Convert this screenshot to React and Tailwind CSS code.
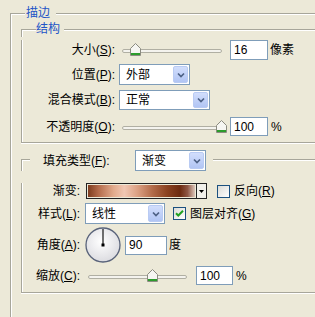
import React from "react";

const Select = ({ size, text }) => (
  <div className={`flex items-stretch border border-[#7f9db9] bg-white ${size}`}>
    <span className="flex-1 flex items-center pl-[6px]">{text}</span>
    <span className="my-px mr-px w-[15px] rounded-[2px] border border-[#b9cbf3] bg-gradient-to-b from-[#d2defc] to-[#b1c5f4] flex items-center justify-center">
      <svg width="8" height="6" viewBox="0 0 8 6">
        <path d="M1 1.5l3 3 3-3" stroke="#4d6185" strokeWidth="1.7" fill="none" />
      </svg>
    </span>
  </div>
);

const Field = ({ size, value }) => (
  <div className={`flex items-center border border-[#7f9db9] bg-white pl-[3px] ${size}`}>
    {value}
  </div>
);

const Slider = ({ size, thumb }) => (
  <div className={`relative h-[14px] flex items-center ${size}`}>
    <div className="mt-[2px] h-[4px] w-full rounded-[2px] border border-[#b0afa3] bg-[#f4f3ee]" />
    <svg className={`absolute top-0 ${thumb}`} width="11" height="13" viewBox="0 0 11 13">
      <path d="M0.5 5.5 L5.5 0.5 L10.5 5.5 V12.5 H0.5 Z" fill="#f6f6f2" stroke="#8b8b80" />
      <rect x="1" y="10" width="9" height="2" fill="#2c9c2c" />
    </svg>
  </div>
);

const Check = ({ checked }) => (
  <div className="w-[13px] h-[13px] border border-[#1c5180] bg-gradient-to-br from-[#dcdcd7] to-white flex items-center justify-center">
    {checked && (
      <svg width="9" height="9" viewBox="0 0 9 9">
        <path d="M1 4.2l2.3 2.3L8 1.8" stroke="#21a121" strokeWidth="2" fill="none" />
      </svg>
    )}
  </div>
);

export default function App() {
  return (
    <div className="w-[315px] h-[317px] overflow-hidden bg-[#ece9d8] pt-[5px] pl-[10px] text-[12px] leading-none text-black font-['Liberation_Sans','Noto_Sans_CJK_SC',sans-serif]">
      {/* 描边 */}
      <div className="flex h-[16px]">
        <div className="w-[15px] h-[8px] self-end border-t border-l border-[#a7a69a] shadow-[inset_1px_1px_0_#fff]" />
        <span className="ml-[1px] mr-[6px] self-center text-[#2154c7]">描边</span>
        <div className="flex-1 h-[8px] self-end border-t border-[#a7a69a] shadow-[inset_0_1px_0_#fff]" />
      </div>
      <div className="h-[296px] border-l border-[#a7a69a] shadow-[inset_1px_0_0_#fff] pl-[10px]">
        {/* 结构 */}
        <div className="flex h-[16px]">
          <div className="w-[15px] h-[8px] self-end border-t border-l border-[#a7a69a] shadow-[inset_1px_1px_0_#fff]" />
          <span className="mr-[4px] self-center text-[#2154c7]">结构</span>
          <div className="flex-1 h-[8px] self-end border-t border-[#a7a69a] shadow-[inset_0_1px_0_#fff]" />
        </div>
        <div className="border-l border-b border-[#a7a69a] shadow-[inset_1px_0_0_#fff,0_1px_0_#fff] pb-[6px]">
          <div className="flex items-center mt-[3px] h-[20px]">
            <span className="w-[93px] text-right">大小(<u>S</u>):</span>
            <Slider size="ml-[7px] w-[100px]" thumb="left-[8px]" />
            <Field size="ml-[8px] w-[38px] h-[20px]" value="16" />
            <span className="ml-[2px]">像素</span>
          </div>
          <div className="flex items-center mt-[4px] h-[21px]">
            <span className="w-[93px] text-right">位置(<u>P</u>):</span>
            <Select size="ml-[4px] w-[71px] h-[21px]" text="外部" />
          </div>
          <div className="flex items-center mt-[5px] h-[20px]">
            <span className="w-[93px] text-right">混合模式(<u>B</u>):</span>
            <Select size="ml-[4px] w-[91px] h-[20px]" text="正常" />
          </div>
          <div className="flex items-center mt-[7px] h-[19px]">
            <span className="w-[93px] text-right">不透明度(<u>O</u>):</span>
            <Slider size="ml-[7px] w-[100px]" thumb="left-[94px]" />
            <Field size="ml-[8px] w-[38px] h-[19px]" value="100" />
            <span className="ml-[3px]">%</span>
          </div>
        </div>

        {/* 填充类型 */}
        <div className="flex h-[21px] mt-[7px]">
          <div className="w-[9px] h-[12px] self-end border-t border-l border-[#a7a69a] shadow-[inset_1px_1px_0_#fff]" />
          <span className="ml-[13px] w-[92px] self-center">填充类型(<u>F</u>):</span>
          <Select size="w-[71px] h-[21px]" text="渐变" />
          <div className="ml-[7px] flex-1 h-[12px] self-end border-t border-[#a7a69a] shadow-[inset_0_1px_0_#fff]" />
        </div>
        <div className="border-l border-b border-[#a7a69a] shadow-[inset_1px_0_0_#fff,0_1px_0_#fff] pb-[7px]">
          <div className="flex items-center mt-[12px] h-[16px]">
            <span className="w-[58px] text-right">渐变:</span>
            <div className="ml-[6px] w-[121px] h-[16px] flex border border-[#222]">
              <div className="flex-1 m-px bg-[linear-gradient(to_right,#7e3c1e_0%,#b46c4c_10%,#e2ab8d_24%,#f1c7b3_34%,#dca184_46%,#b36c4a_60%,#8b4221_74%,#6c2a10_86%,#8e5644_93%,#dcc6ba_100%)]" />
              <div className="w-[10px] border-l border-[#222] bg-[#f1f0ea] flex items-center justify-center">
                <svg width="5" height="3" viewBox="0 0 5 3">
                  <path d="M0 0h5L2.5 3z" fill="#000" />
                </svg>
              </div>
            </div>
            <div className="ml-[10px]"><Check /></div>
            <span className="ml-[4px]">反向(<u>R</u>)</span>
          </div>
          <div className="flex items-center mt-[4px] h-[21px]">
            <span className="w-[58px] text-right">样式(<u>L</u>):</span>
            <Select size="ml-[5px] w-[80px] h-[21px]" text="线性" />
            <div className="ml-[8px]"><Check checked /></div>
            <span className="ml-[4px]">图层对齐(<u>G</u>)</span>
          </div>
          <div className="flex items-center mt-[3px] h-[36px]">
            <span className="w-[58px] text-right">角度(<u>A</u>):</span>
            <svg className="ml-[5px]" width="36" height="36" viewBox="0 0 36 36">
              <defs>
                <radialGradient id="dial" cx="45%" cy="40%" r="65%">
                  <stop offset="0" stopColor="#ffffff" />
                  <stop offset="1" stopColor="#d9d9de" />
                </radialGradient>
              </defs>
              <circle cx="18" cy="18" r="17" fill="url(#dial)" stroke="#59637a" strokeWidth="1.3" />
              <line x1="18" y1="18" x2="18" y2="2" stroke="#000" strokeWidth="1.1" />
              <rect x="16.5" y="16.5" width="3" height="3" fill="#000" />
            </svg>
            <Field size="ml-[4px] w-[42px] h-[19px]" value="90" />
            <span className="ml-[2px]">度</span>
          </div>
          <div className="flex items-center mt-[3px] h-[19px]">
            <span className="w-[58px] text-right">缩放(<u>C</u>):</span>
            <Slider size="ml-[8px] w-[99px]" thumb="left-[59px]" />
            <Field size="ml-[9px] w-[37px] h-[19px]" value="100" />
            <span className="ml-[3px]">%</span>
          </div>
        </div>
      </div>
    </div>
  );
}
